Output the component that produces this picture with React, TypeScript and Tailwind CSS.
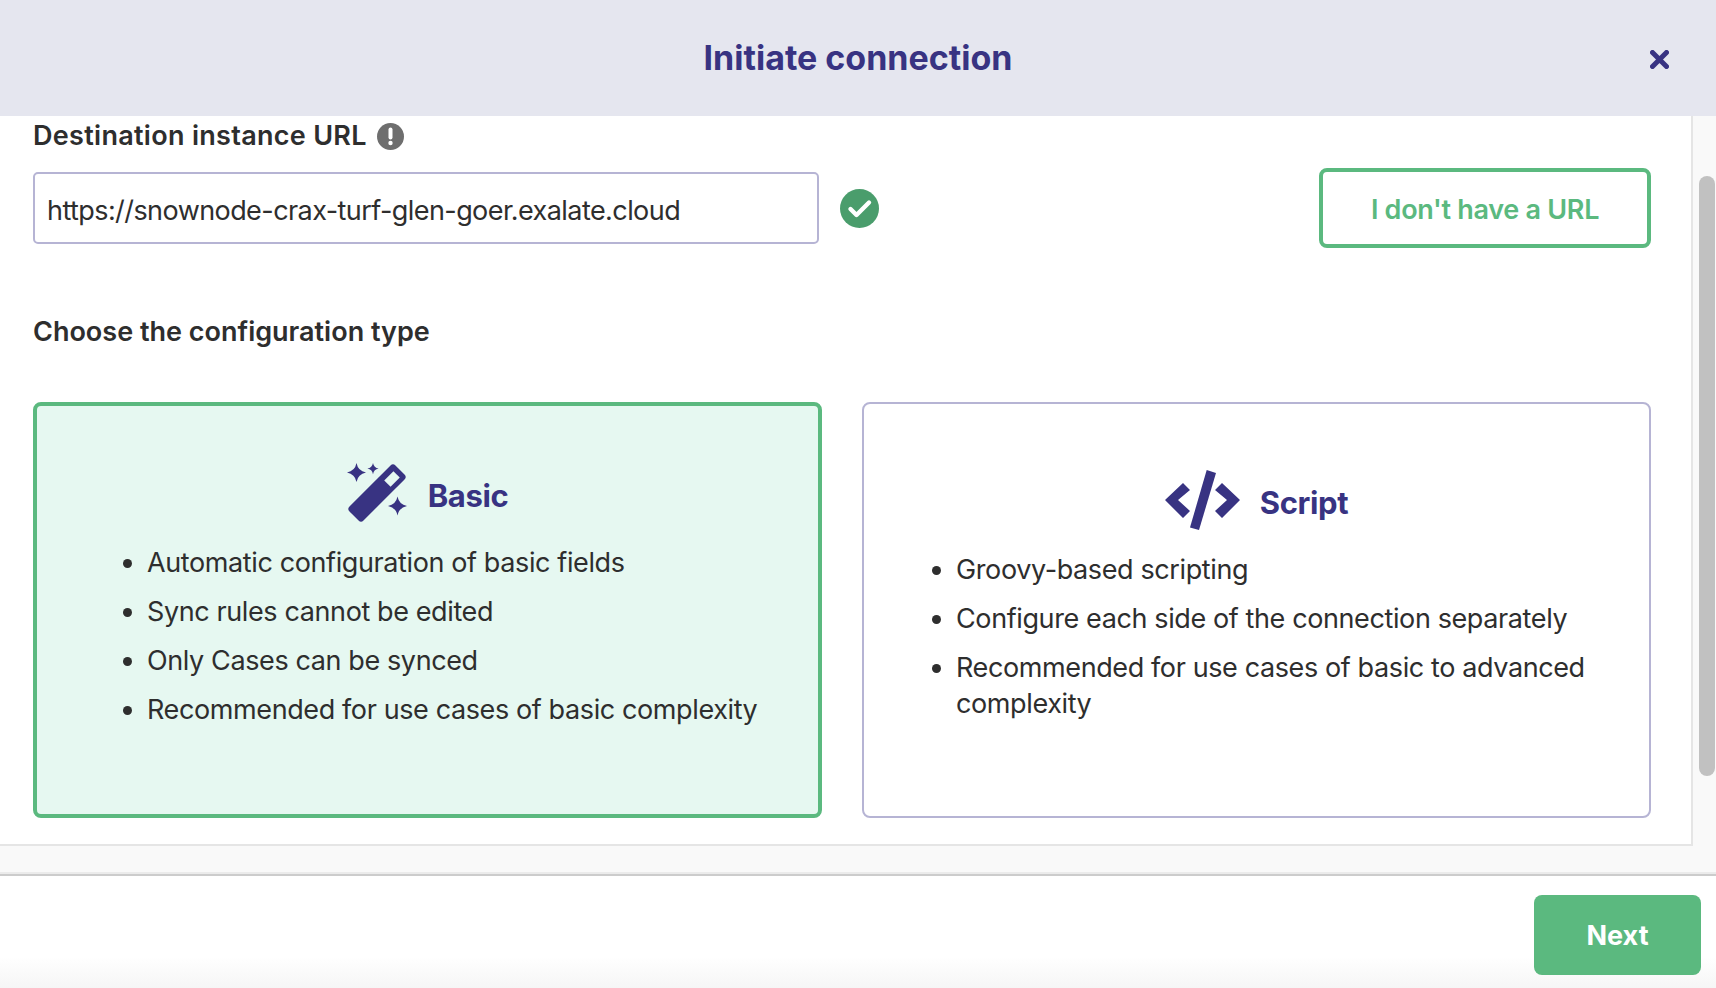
import type { FC } from 'react';

const font = "[font-family:Inter,'Liberation_Sans',sans-serif]";

const basicPoints = [
    'Automatic configuration of basic fields',
    'Sync rules cannot be edited',
    'Only Cases can be synced',
    'Recommended for use cases of basic complexity',
];

const scriptPoints = [
    'Groovy-based scripting',
    'Configure each side of the connection separately',
    'Recommended for use cases of basic to advanced complexity',
];

const star = (cx: number, cy: number, r: number) => {
    const k = r * 0.16;
    return `M${cx} ${cy - r}Q${cx + k} ${cy - k} ${cx + r} ${cy}Q${cx + k} ${cy + k} ${cx} ${cy + r}Q${cx - k} ${cy + k} ${cx - r} ${cy}Q${cx - k} ${cy - k} ${cx} ${cy - r}Z`;
};

const WandIcon: FC = () => (
    <svg width="60" height="60" viewBox="0 0 60 60" fill="#383382">
        <rect x="-2.5" y="20.1" width="65" height="19.8" rx="3.5" transform="rotate(-45 30 30)" />
        <rect x="38.5" y="11.5" width="13" height="9" fill="#e6f8f1" transform="rotate(-45 45 16)" />
        <path d={star(9.5, 9.5, 9.5)} />
        <path d={star(26, 5.6, 5.6)} />
        <path d={star(50.5, 43, 9.5)} />
    </svg>
);

const CodeIcon: FC = () => (
    <svg width="75" height="60" viewBox="0 0 75 60" fill="#383382">
        <path d="M41.7 0L51 3L34 60L25 57.5Z" />
        <path d="M0 30L18 13L25 20L13 30L25 41L18 48Z" />
        <path d="M75 30L57 13L50 20L62 30L50 41L57 48Z" />
    </svg>
);

const InfoIcon: FC = () => (
    <svg width="27" height="27" viewBox="0 0 27 27">
        <circle cx="13.5" cy="13.5" r="13.5" fill="#6e6e6e" />
        <path d="M13.5 6.5V14.5" stroke="#fff" strokeWidth="4" strokeLinecap="round" />
        <circle cx="13.5" cy="20" r="2.2" fill="#fff" />
    </svg>
);

const CheckIcon: FC = () => (
    <svg width="39" height="39" viewBox="0 0 39 39">
        <circle cx="19.5" cy="19.5" r="19.5" fill="#4a9d6c" />
        <path d="M10.5 20L16.5 26L29 13.5" fill="none" stroke="#fff" strokeWidth="4.4" strokeLinecap="round" strokeLinejoin="round" />
    </svg>
);

const CloseIcon: FC = () => (
    <svg width="19" height="19" viewBox="0 0 19 19">
        <path d="M2.5 2.5L16.5 16.5M16.5 2.5L2.5 16.5" stroke="#383382" strokeWidth="5" strokeLinecap="round" />
    </svg>
);

const App: FC = () => {
    return (
        <div className={`${font} flex h-[988px] w-[1716px] flex-col overflow-hidden bg-white text-[#2e2e2e]`}>
            <header className="relative flex h-[116px] shrink-0 items-center justify-center bg-[#e5e6ef]">
                <h1 className="-mt-[2px] text-[34px] font-bold text-[#383382]">Initiate connection</h1>
                <button type="button" className="absolute right-[47px] top-[50px]" aria-label="Close">
                    <CloseIcon />
                </button>
            </header>

            <div className="flex h-[758px] shrink-0 bg-[#f9f9f9]">
                <main className="h-[730px] w-[1693px] border-r-2 border-b-2 border-[#e5e5e5] bg-white pl-[33px] pr-[40px] pt-[4px]">
                    <div className="flex h-[32px] items-center gap-[10px]">
                        <span className="text-[27px] font-semibold leading-[32px] tracking-[0.3px]">Destination instance URL</span>
                        <InfoIcon />
                    </div>

                    <div className="mt-[16px] flex items-center">
                        <input
                            readOnly
                            value="https://snownode-crax-turf-glen-goer.exalate.cloud"
                            className="h-[72px] w-[786px] rounded-[5px] border-2 border-[#b6b4d4] bg-white pl-[12px] pt-[5px] text-[27px] tracking-[-0.57px] text-[#2e2e2e] outline-none"
                        />
                        <span className="ml-[21px]">
                            <CheckIcon />
                        </span>
                        <button
                            type="button"
                            className="ml-auto h-[80px] w-[332px] rounded-[8px] border-4 border-[#5bb97f] bg-white pt-[4px] text-[27px] font-semibold tracking-[-0.3px] text-[#5bb97f]"
                        >
                            I don't have a URL
                        </button>
                    </div>

                    <h2 className="mt-[68px] text-[27px] font-semibold leading-[32px]">Choose the configuration type</h2>

                    <div className="mt-[54px] grid grid-cols-[789px_789px] gap-[40px]">
                        <section className="h-[416px] rounded-[8px] border-4 border-[#5bb97f] bg-[#e6f8f1] pt-[57px]">
                            <div className="flex items-center justify-center gap-[21px]">
                                <WandIcon />
                                <span className="pt-[6px] text-[31px] font-bold tracking-[-0.4px] text-[#383382]">Basic</span>
                            </div>
                            <ul className="mt-[22px] list-disc pl-[110px] pr-[20px] text-[27px] leading-[36px] tracking-[-0.39px]">
                                {basicPoints.map((point) => (
                                    <li key={point} className="mb-[13px]">{point}</li>
                                ))}
                            </ul>
                        </section>

                        <section className="h-[416px] rounded-[8px] border-2 border-[#b6b4d4] bg-white pt-[66px]">
                            <div className="flex items-center justify-center gap-[20px]">
                                <CodeIcon />
                                <span className="pt-[6px] text-[31px] font-bold tracking-[-0.4px] text-[#383382]">Script</span>
                            </div>
                            <ul className="mt-[22px] list-disc pl-[92px] pr-[40px] text-[27px] leading-[36px] tracking-[-0.39px]">
                                {scriptPoints.map((point) => (
                                    <li key={point} className="mb-[13px]">{point}</li>
                                ))}
                            </ul>
                        </section>
                    </div>
                </main>

                <div className="w-[23px] pl-[6px] pt-[60px]">
                    <div className="h-[600px] w-[16px] rounded-[8px] bg-[#c1c1c1]" />
                </div>
            </div>

            <footer className="flex h-[114px] shrink-0 justify-end border-t-2 border-t-[#cccccc] bg-[linear-gradient(#fff_0%,#fff_72%,#f6f6f6_100%)] pr-[15px] pt-[19px] shadow-[0_-2px_0_#ebebeb]">
                <button type="button" className="h-[80px] w-[167px] rounded-[8px] bg-[#5bb97f] pt-[2px] text-[27px] font-bold text-white">
                    Next
                </button>
            </footer>
        </div>
    );
};

export default App;
